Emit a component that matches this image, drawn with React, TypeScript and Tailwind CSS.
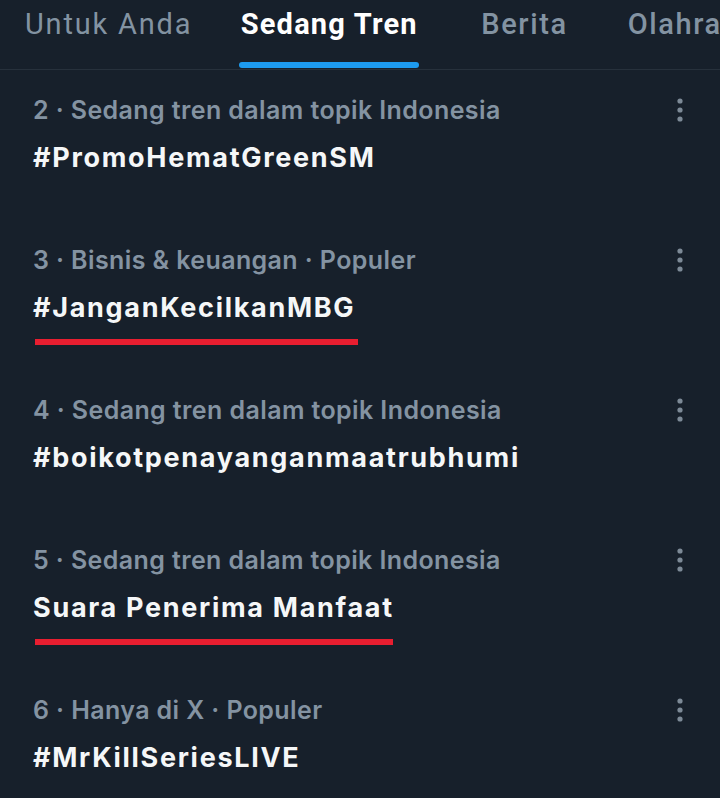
import React from "react";

const rows = [
  { meta: "2 · Sedang tren dalam topik Indonesia", title: "#PromoHematGreenSM", line: 0 },
  { meta: "3 · Bisnis & keuangan · Populer", title: "#JanganKecilkanMBG", line: 323 },
  { meta: "4 · Sedang tren dalam topik Indonesia", title: "#boikotpenayanganmaatrubhumi", line: 0 },
  { meta: "5 · Sedang tren dalam topik Indonesia", title: "Suara Penerima Manfaat", line: 358 },
  { meta: "6 · Hanya di X · Populer", title: "#MrKillSeriesLIVE", line: 0 },
];

function Dots() {
  return (
    <svg width="10" height="26" viewBox="0 0 10 26" className="flex-none">
      <circle cx="5" cy="4" r="2.6" fill="#7d8a97" />
      <circle cx="5" cy="13" r="2.6" fill="#7d8a97" />
      <circle cx="5" cy="22" r="2.6" fill="#7d8a97" />
    </svg>
  );
}

export default function App() {
  return (
    <div
      className="w-[720px] h-[798px] overflow-hidden bg-[#17202b]"
      style={{ fontFamily: "Inter, 'Noto Sans', sans-serif" }}
    >
      <div className="relative h-[70px] border-b border-[#27313c] whitespace-nowrap flex items-start pt-[4px]" style={{ fontFamily: "Roboto, 'Noto Sans', sans-serif" }}>
        <div className="ml-[25px] text-[29px] leading-[40px] text-[#8393a2] tracking-[1.8px]">Untuk Anda</div>
        <div className="ml-[47px] flex flex-col items-center">
          <div className="text-[29px] leading-[40px] text-white font-bold tracking-[1.2px]">Sedang Tren</div>
          <div className="mt-[18px] h-[6px] w-[180px] rounded-full bg-[#1d9bf0]" />
        </div>
        <div className="ml-[62px] text-[29px] leading-[40px] text-[#8393a2] font-medium tracking-[1.6px]">Berita</div>
        <div className="ml-[60px] text-[29px] leading-[40px] text-[#8393a2] font-medium tracking-[1.6px]">Olahraga</div>
      </div>
      {rows.map((r, i) => (
        <div key={i} className="h-[150px] flex flex-col pl-[33px] pr-[35px] pt-[26px]">
          <div className="flex items-center justify-between h-[28px]">
            <div className="text-[25px] leading-[28px] font-semibold text-[#8493a2] whitespace-nowrap tracking-[0.4px]">{r.meta}</div>
            <Dots />
          </div>
          <div className="mt-[16px] text-[27px] leading-[36px] font-bold text-[#f5f7f8] whitespace-nowrap tracking-[1.7px]">{r.title}</div>
          {r.line > 0 && (
            <div className="mt-[13px] ml-[2px] h-[6px] bg-[#e81e30]" style={{ width: r.line }} />
          )}
        </div>
      ))}
    </div>
  );
}
